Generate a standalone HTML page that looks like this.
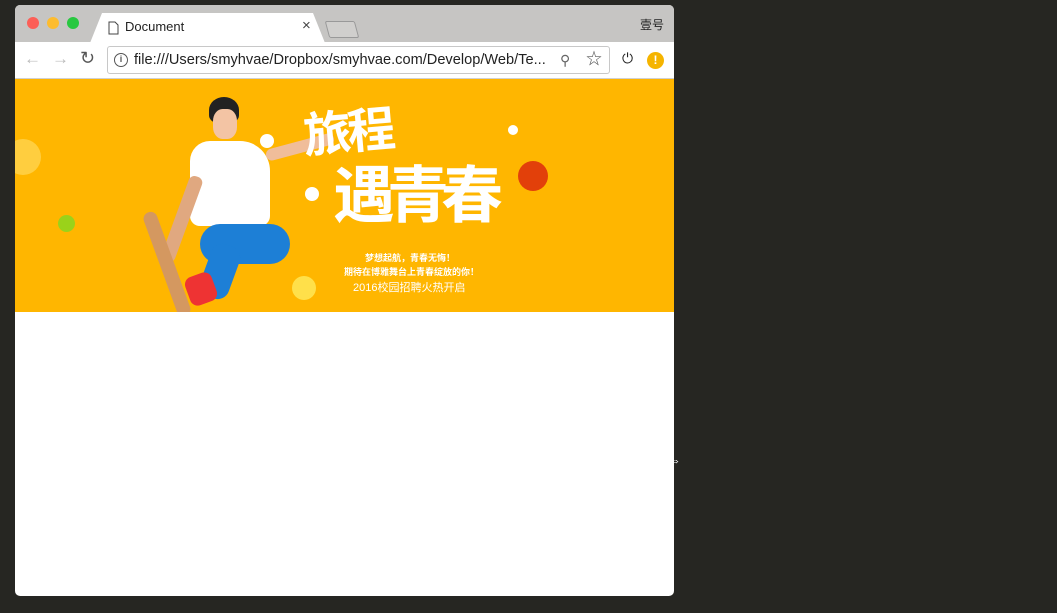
<!DOCTYPE html>
<html><head><meta charset="utf-8"><style>
*{margin:0;padding:0;box-sizing:border-box}
body{width:1057px;height:613px;background:#262622;position:relative;overflow:hidden;font-family:"Liberation Sans","Noto Sans CJK SC",sans-serif}
.win{position:absolute;left:15px;top:5px;width:659px;height:591px;background:#fff;border-radius:5px;overflow:hidden}
.tabbar{position:absolute;left:0;top:0;width:659px;height:37px;background:#c6c5c3}
.dot{position:absolute;top:12px;width:12px;height:12px;border-radius:50%}
.tab{position:absolute;left:75px;top:8px;width:235px;height:30px;background:#fff;clip-path:polygon(0 100%,12px 0,calc(100% - 12px) 0,100% 100%)}
.toolbar{position:absolute;left:0;top:37px;width:659px;height:37px;background:#fff;border-bottom:1px solid #d0d0d0}
.url{position:absolute;left:92px;top:4px;width:503px;height:28px;border:1px solid #c8c8c8;border-radius:3px;font-size:14.6px;color:#222;line-height:26px;padding-left:26px}
.banner{position:absolute;left:0;top:74px;width:659px;height:233px;background:#ffb600;overflow:hidden}
.w{position:absolute;color:#fff;font-weight:bold;white-space:nowrap}
.c{position:absolute;border-radius:50%}
</style></head><body>
<div class="win">
<div class="tabbar">
<div class="dot" style="left:12px;background:#fc5f57"></div>
<div class="dot" style="left:32px;background:#fdbc2e"></div>
<div class="dot" style="left:52px;background:#28c840"></div>
<div class="tab">
<svg style="position:absolute;left:18px;top:8px" width="11" height="14"><path d="M1 1h6l3 3v9H1z" fill="none" stroke="#444"/></svg>
<span style="position:absolute;left:35px;top:6px;font-size:13px;color:#222">Document</span>
<span style="position:absolute;left:212px;top:4px;font-size:15px;color:#444">×</span>
</div>
<div style="position:absolute;left:312px;top:16px;width:30px;height:17px;border:1px solid #999;border-radius:2px;transform:skewX(15deg);background:#d0cfcd"></div>
<span style="position:absolute;left:625px;top:11px;font-size:12px;color:#222">壹号</span>
</div>
<div class="toolbar">
<span style="position:absolute;left:9px;top:7px;font-size:17px;color:#bbb">←</span>
<span style="position:absolute;left:37px;top:7px;font-size:17px;color:#bbb">→</span>
<span style="position:absolute;left:65px;top:6px;font-size:18px;color:#555">↻</span>
<div class="url">file:///Users/smyhvae/Dropbox/smyhvae.com/Develop/Web/Te...
<span style="position:absolute;left:6px;top:6px;width:14px;height:14px;border:1.5px solid #555;border-radius:50%;font-size:9px;line-height:11px;text-align:center;font-weight:bold;color:#555">i</span>
<span style="position:absolute;left:452px;top:0;font-size:14px;color:#666">⚲</span>
<span style="position:absolute;left:478px;top:0;font-size:16px;color:#555">☆</span>
</div>
<span style="position:absolute;left:607px;top:8px;font-size:14px;color:#222">⏻</span>
<div style="position:absolute;left:632px;top:10px;width:17px;height:17px;border-radius:50%;background:#f5b400;color:#fff;font-size:12px;font-weight:bold;text-align:center;line-height:17px">!</div>
</div>
<div class="banner">
<div class="c" style="left:-10px;top:60px;width:36px;height:36px;background:#ffd95a;opacity:.7"></div>
<div class="c" style="left:43px;top:136px;width:17px;height:17px;background:#9ad21a"></div>
<div class="c" style="left:277px;top:197px;width:24px;height:24px;background:#ffe04a"></div>
<div class="c" style="left:503px;top:82px;width:30px;height:30px;background:#e2400a"></div>
<div class="c" style="left:493px;top:46px;width:10px;height:10px;background:#fff"></div>
<div class="c" style="left:245px;top:55px;width:14px;height:14px;background:#fff"></div>
<div class="c" style="left:290px;top:108px;width:14px;height:14px;background:#fff"></div>
<div style="position:absolute;left:194px;top:18px;width:30px;height:26px;background:#222;border-radius:50% 50% 30% 30%"></div>
<div style="position:absolute;left:198px;top:30px;width:24px;height:30px;background:#f3c4a4;border-radius:40%"></div>
<div style="position:absolute;left:175px;top:62px;width:80px;height:85px;background:#fff;border-radius:20px 30px 10px 10px"></div>
<div style="position:absolute;left:250px;top:62px;width:70px;height:12px;background:#f0bd9a;transform:rotate(-15deg);border-radius:6px"></div>
<div style="position:absolute;left:160px;top:95px;width:14px;height:90px;background:#e0a880;transform:rotate(20deg);border-radius:6px"></div>
<div style="position:absolute;left:185px;top:145px;width:90px;height:40px;background:#1d7fd6;border-radius:20px"></div>
<div style="position:absolute;left:190px;top:165px;width:30px;height:55px;background:#1d7fd6;border-radius:12px;transform:rotate(20deg)"></div>
<div style="position:absolute;left:172px;top:195px;width:28px;height:30px;background:#e33;border-radius:8px;transform:rotate(-20deg)"></div>
<div style="position:absolute;left:145px;top:130px;width:14px;height:110px;background:#d49860;transform:rotate(-20deg);border-radius:7px"></div>
<div class="w" style="left:288px;top:14px;font-size:48px;letter-spacing:-4px;transform:rotate(-5deg)">旅程</div>
<div class="w" style="left:318px;top:66px;font-size:62px;letter-spacing:-8px">遇青春</div>
<div class="w" style="left:350px;top:172px;font-size:9px">梦想起航，青春无悔！</div>
<div class="w" style="left:329px;top:186px;font-size:9px">期待在博雅舞台上青春绽放的你！</div>
<div class="w" style="left:338px;top:200px;font-size:11px;font-weight:normal">2016校园招聘火热开启</div>
</div>
</div>
<span style="position:absolute;left:667px;top:452px;font-size:14px;color:#fff">⇔</span>
</body></html>
